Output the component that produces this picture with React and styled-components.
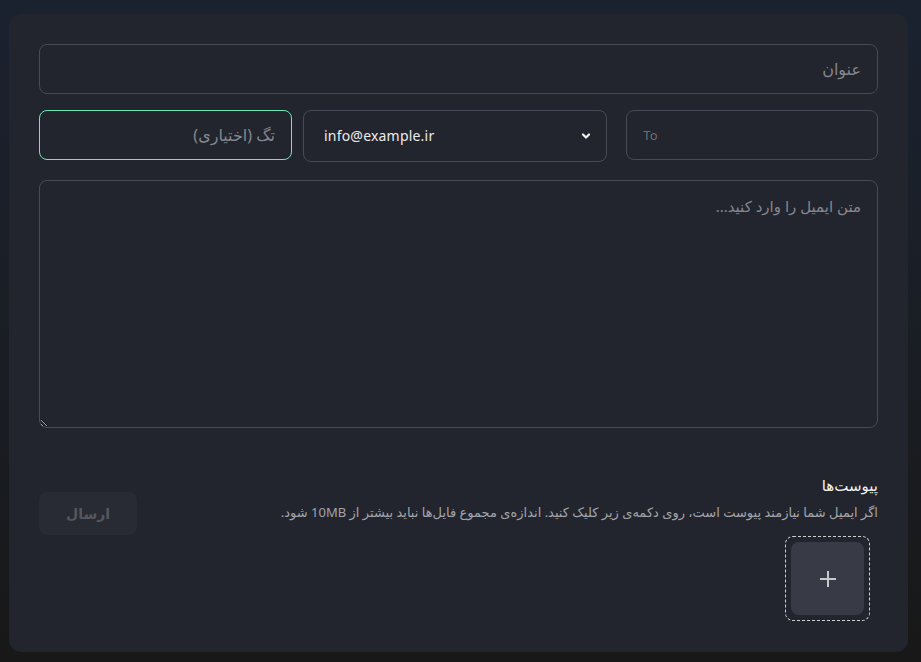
import styled, { createGlobalStyle } from "styled-components";

const GlobalStyle = createGlobalStyle`
  html, body {
    margin: 0;
    padding: 0;
    height: 100%;
  }
  body {
    background: linear-gradient(180deg, #1a2230 0%, #1a1f27 40%, #181818 100%);
    font-family: "Noto Sans", "DejaVu Sans", sans-serif;
    color: #e6e6e6;
  }
  * {
    box-sizing: border-box;
  }
`;

const Page = styled.div`
  padding: 14px 13px 10px 9px;
  height: 662px;
`;

const Card = styled.form`
  direction: rtl;
  background: #22252d;
  border-radius: 12px;
  height: 638px;
  padding: 30px 30px 31px 30px;
  display: flex;
  flex-direction: column;
`;

const Field = styled.input`
  width: ${(p) => p.$width || "100%"};
  height: 50px;
  background: transparent;
  border: 1px solid ${(p) => (p.$focused ? "#6ee7b7" : "#484a57")};
  border-radius: 8px;
  padding: 0 16px;
  color: #e6e6e6;
  font-family: "Noto Sans", "DejaVu Sans", sans-serif;
  font-size: ${(p) => (p.$small ? "13px" : "16px")};
  direction: ${(p) => (p.$ltr ? "ltr" : "rtl")};
  outline: none;

  &::placeholder {
    color: ${(p) => (p.$dim ? "#6a6c75" : "#85878f")};
  }
`;

const Row = styled.div`
  display: flex;
  align-items: flex-start;
  margin-top: 16px;
`;

const Select = styled.div`
  direction: ltr;
  width: 306px;
  height: 52px;
  margin: 0 19px 0 11px;
  border: 1px solid #484a57;
  border-radius: 8px;
  display: flex;
  align-items: center;
  justify-content: space-between;
  padding: 0 14px 0 20px;
  font-size: 14px;
  color: #ececec;
  letter-spacing: 0.2px;
`;

const Message = styled.textarea`
  margin-top: 18px;
  width: 100%;
  height: 250px;
  background: transparent;
  border: 1px solid #484a57;
  border-radius: 8px;
  padding: 15px 16px;
  color: #e6e6e6;
  font-family: "Noto Sans", "DejaVu Sans", sans-serif;
  font-size: 15px;
  direction: rtl;
  outline: none;
  resize: vertical;

  &::placeholder {
    color: #85878f;
  }
`;

const Bottom = styled.div`
  display: flex;
  justify-content: space-between;
  align-items: flex-start;
  margin-top: 46px;
`;

const Attachments = styled.div`
  display: flex;
  flex-direction: column;
  align-items: flex-start;
`;

const Heading = styled.h3`
  margin: 0;
  font-size: 15px;
  font-weight: 400;
  color: #f2f2f2;
  line-height: 22px;
`;

const Hint = styled.p`
  margin: 6px 0 0;
  font-size: 13px;
  color: #a2a4ab;
  line-height: 20px;
`;

const Dropzone = styled.div`
  margin: 14px 8px 0 0;
  width: 85px;
  height: 85px;
  border: 1.5px dashed #d0d0d4;
  border-radius: 8px;
  padding: 5px;
`;

const AddButton = styled.button`
  width: 100%;
  height: 100%;
  border: none;
  border-radius: 8px;
  background: #383a46;
  color: #c8c8cc;
  display: flex;
  align-items: center;
  justify-content: center;
  cursor: pointer;
`;

const Send = styled.button`
  margin-top: 18px;
  width: 98px;
  height: 43px;
  border: none;
  border-radius: 8px;
  background: #282b33;
  color: #55575e;
  font-family: "Noto Sans", "DejaVu Sans", sans-serif;
  font-weight: 700;
  font-size: 14px;
`;

const Chevron = () => (
  <svg width="12" height="12" viewBox="0 0 24 24" fill="none" stroke="#f0f0f0" strokeWidth="4.5" strokeLinecap="round" strokeLinejoin="round">
    <path d="M6 9l6 6 6-6" />
  </svg>
);

const Plus = () => (
  <svg width="20" height="20" viewBox="0 0 20 20" fill="none" stroke="#c8c8cc" strokeWidth="2">
    <path d="M10 2v16M2 10h16" />
  </svg>
);

export default function App() {
  return (
    <>
      <GlobalStyle />
      <Page>
        <Card onSubmit={(e) => e.preventDefault()}>
          <Field placeholder="عنوان" />
          <Row>
            <Field $width="253px" $ltr $dim $small placeholder="To" />
            <Select>
              <span>info@example.ir</span>
              <Chevron />
            </Select>
            <Field $width="253px" $focused placeholder="تگ (اختیاری)" />
          </Row>
          <Message placeholder="متن ایمیل را وارد کنید..." />
          <Bottom>
            <Attachments>
              <Heading>پیوست‌ها</Heading>
              <Hint>
                اگر ایمیل شما نیازمند پیوست است، روی دکمه‌ی زیر کلیک کنید. اندازه‌ی مجموع فایل‌ها نباید بیشتر از 10MB شود.
              </Hint>
              <Dropzone>
                <AddButton type="button">
                  <Plus />
                </AddButton>
              </Dropzone>
            </Attachments>
            <Send type="submit" disabled>
              ارسال
            </Send>
          </Bottom>
        </Card>
      </Page>
    </>
  );
}
